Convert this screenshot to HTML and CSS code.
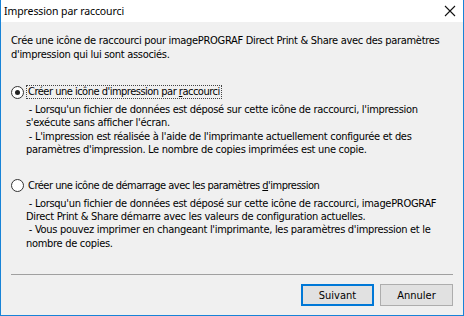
FILE: index.html
```html
<!DOCTYPE html>
<html>
  <head>
    <meta charset="UTF-8" />
    <title>Impression par raccourci</title>
    <link rel="stylesheet" href="styles.css">
  </head>
  <body>
    <div class="window">
      <div class="titlebar">
        <span class="title">Impression par raccourci</span>
        <svg class="close" width="12" height="12" viewBox="0 0 12 12">
          <path d="M1 1 L11 11 M11 1 L1 11" stroke="#111" stroke-width="1.1" fill="none" />
        </svg>
      </div>
      <div class="content">
        <p class="intro">Crée une icône de raccourci pour imagePROGRAF Direct Print &amp; Share avec des paramètres<br>d'impression qui lui sont associés.</p>

        <div class="option option-first">
          <span class="radio checked"></span>
          <span class="label focused">Créer une icône d'impression par <u>r</u>accourci</span>
        </div>
        <p class="desc">&nbsp;- Lorsqu'un fichier de données est déposé sur cette icône de raccourci, l'impression<br>s'exécute sans afficher l'écran.<br>&nbsp;- L'impression est réalisée à l'aide de l'imprimante actuellement configurée et des<br>paramètres d'impression. Le nombre de copies imprimées est une copie.</p>

        <div class="option option-second">
          <span class="radio"></span>
          <span class="label">Créer une icône de démarrage avec les paramètres <u>d</u>'impression</span>
        </div>
        <p class="desc">&nbsp;- Lorsqu'un fichier de données est déposé sur cette icône de raccourci, imagePROGRAF<br>Direct Print &amp; Share démarre avec les valeurs de configuration actuelles.<br>&nbsp;- Vous pouvez imprimer en changeant l'imprimante, les paramètres d'impression et le<br>nombre de copies.</p>

        <div class="footer">
          <div class="separator"></div>
          <div class="buttons">
            <button class="btn btn-default">Suivant</button>
            <button class="btn">Annuler</button>
          </div>
        </div>
      </div>
    </div>
  </body>
</html>
```

FILE: styles.css
```css
body {
  margin: 0;
  padding: 0;
  font-family: 'DejaVu Sans Condensed', 'DejaVu Sans', sans-serif;
  font-size: 11px;
  letter-spacing: -0.3px;
  color: #000000;
  background-color: #ffffff;
}
.window {
  display: flex;
  flex-direction: column;
  width: 464px;
  height: 316px;
  box-sizing: border-box;
  border: 1px solid #1883d7;
  border-top: none;
}
.titlebar {
  display: flex;
  align-items: center;
  justify-content: space-between;
  height: 22px;
  padding: 0 7px 0 3px;
  background-color: #ffffff;
}
.title {
  font-family: 'Noto Sans', sans-serif;
  font-size: 10.5px;
  letter-spacing: -0.1px;
}
.close {
  display: block;
}
.content {
  flex: 1;
  display: flex;
  flex-direction: column;
  background-color: #f0f0f0;
  padding: 12px 10px 9px 10px;
}
.intro {
  margin: 0;
  line-height: 14px;
  white-space: nowrap;
}
.option {
  display: flex;
  align-items: center;
  height: 14px;
  white-space: nowrap;
}
.option-first {
  margin-top: 23px;
}
.option-second {
  margin-top: 22px;
}
.radio {
  position: relative;
  width: 11px;
  height: 11px;
  border: 1px solid #333333;
  border-radius: 50%;
  background-color: #ffffff;
  margin-right: 2px;
}
.radio.checked::after {
  content: '';
  position: absolute;
  left: 3px;
  top: 3px;
  width: 5px;
  height: 5px;
  border-radius: 50%;
  background-color: #222222;
}
.label {
  padding: 0 1px;
  line-height: 12px;
  letter-spacing: -0.5px;
  border: 1px dotted transparent;
}
.label.focused {
  border-color: #444444;
}
.desc {
  margin: 4px 0 0 15px;
  line-height: 13.4px;
  white-space: nowrap;
}
.footer {
  margin-top: auto;
}
.separator {
  height: 1px;
  background-color: #a0a0a0;
  margin-bottom: 9px;
}
.buttons {
  display: flex;
  justify-content: flex-end;
  gap: 6px;
}
.btn {
  width: 73px;
  height: 22px;
  box-sizing: border-box;
  font-family: 'DejaVu Sans Condensed', 'DejaVu Sans', sans-serif;
  font-size: 11px;
  color: #000000;
  background-color: #e1e1e1;
  border: 1px solid #adadad;
  padding: 0;
}
.btn-default {
  border: 2px solid #0078d7;
}
```
